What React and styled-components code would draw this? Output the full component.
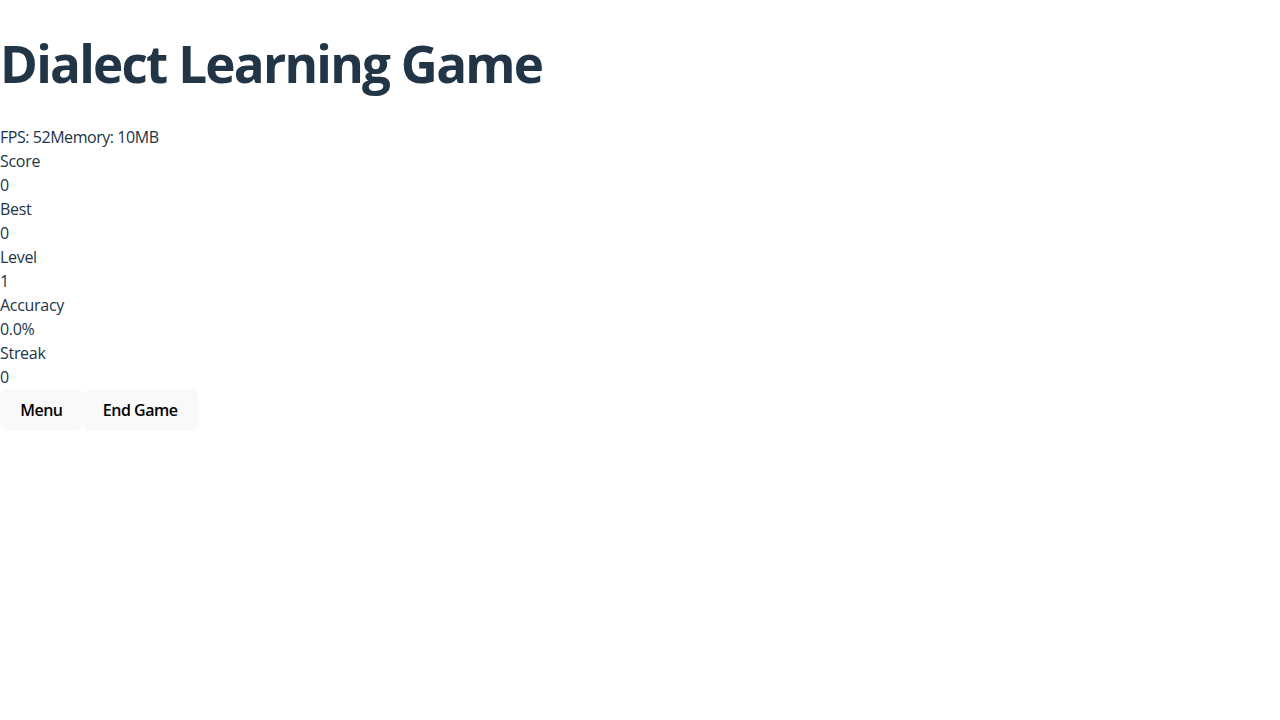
import React from "react";
import styled, { createGlobalStyle } from "styled-components";

const Global = createGlobalStyle`
  html, body { margin: 0; padding: 0; background: #ffffff; }
  body {
    font-family: "Open Sans", "Noto Sans", sans-serif;
    font-size: 16px;
    line-height: 1.5;
    color: #213547;
  }
`;

const Page = styled.div`
  display: block;
`;

const Title = styled.h1`
  font-size: 51.2px;
  line-height: 1.1;
  font-weight: 700;
  margin: 35px 0 34px;
  color: #213547;
  letter-spacing: -1.75px;
`;

const Perf = styled.div`
  display: block;
  letter-spacing: -0.45px;
`;

const Stat = styled.div`
  display: block;
  letter-spacing: -0.3px;
`;

const Line = styled.div`
  display: block;
`;

const Controls = styled.div`
  display: flex;
`;

const Button = styled.button`
  font-family: "Open Sans", "Noto Sans", sans-serif;
  font-size: 16px;
  line-height: 20.8px;
  font-weight: 600;
  letter-spacing: -0.5px;
  padding: 9.6px 19.2px;
  border: 1px solid transparent;
  border-radius: 8px;
  background: #f9f9f9;
  color: #000;
  cursor: pointer;
`;

const stats = [
  ["Score", "0"],
  ["Best", "0"],
  ["Level", "1"],
  ["Accuracy", "0.0%"],
  ["Streak", "0"],
];

export default function App() {
  return (
    <Page>
      <Global />
      <Title>Dialect Learning Game</Title>
      <Perf>
        <span>FPS: 52</span>
        <span>Memory: 10MB</span>
      </Perf>
      {stats.map(([label, value]) => (
        <Stat key={label}>
          <Line>{label}</Line>
          <Line>{value}</Line>
        </Stat>
      ))}
      <Controls>
        <Button>Menu</Button>
        <Button>End Game</Button>
      </Controls>
    </Page>
  );
}
